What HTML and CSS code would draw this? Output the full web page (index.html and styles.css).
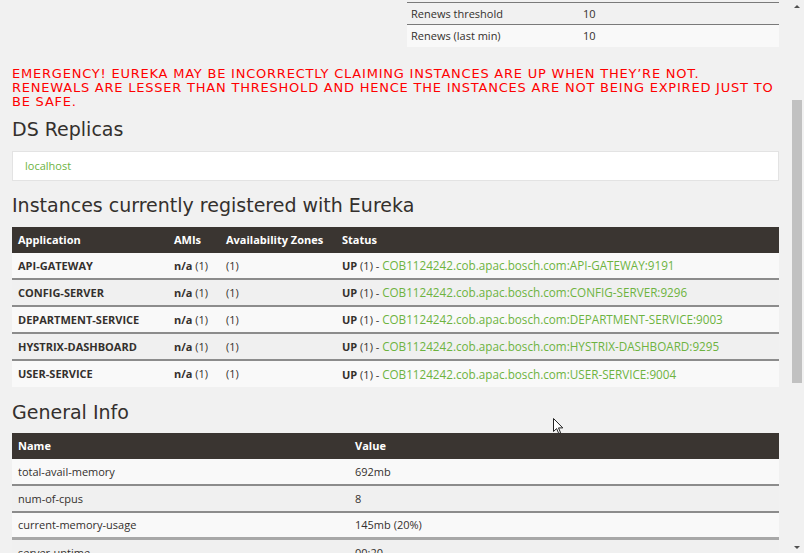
FILE: index.html
```html
<!DOCTYPE html>
<html>
<head>
<meta charset="utf-8">
<link rel="stylesheet" href="styles.css">
<title>Eureka</title>
</head>
<body>
<div class="page">
  <main class="content">
    <div class="status-grid">
      <div class="status-left"></div>
      <table class="kv">
        <tbody>
          <tr class="row-even"><td class="kv-name">Renews threshold</td><td>10</td></tr>
          <tr class="row-odd"><td class="kv-name">Renews (last min)</td><td>10</td></tr>
        </tbody>
      </table>
    </div>

    <p class="emergency">EMERGENCY! EUREKA MAY BE INCORRECTLY CLAIMING INSTANCES ARE UP WHEN THEY’RE NOT. RENEWALS ARE LESSER THAN THRESHOLD AND HENCE THE INSTANCES ARE NOT BEING EXPIRED JUST TO BE SAFE.</p>

    <h2 class="heading">DS Replicas</h2>
    <ul class="replicas">
      <li><a class="link" href="#">localhost</a></li>
    </ul>

    <h2 class="heading">Instances currently registered with Eureka</h2>
    <table class="data instances">
      <colgroup>
        <col class="c-app"><col class="c-ami"><col class="c-az"><col>
      </colgroup>
      <thead>
        <tr><th>Application</th><th>AMIs</th><th>Availability Zones</th><th>Status</th></tr>
      </thead>
      <tbody>
        <tr><td class="app">API-GATEWAY</td><td><b>n/a</b> (1)</td><td>(1)</td><td><b>UP</b> (1) - <a class="link" href="#">COB1124242.cob.apac.bosch.com:API-GATEWAY:9191</a></td></tr>
        <tr><td class="app">CONFIG-SERVER</td><td><b>n/a</b> (1)</td><td>(1)</td><td><b>UP</b> (1) - <a class="link" href="#">COB1124242.cob.apac.bosch.com:CONFIG-SERVER:9296</a></td></tr>
        <tr><td class="app">DEPARTMENT-SERVICE</td><td><b>n/a</b> (1)</td><td>(1)</td><td><b>UP</b> (1) - <a class="link" href="#">COB1124242.cob.apac.bosch.com:DEPARTMENT-SERVICE:9003</a></td></tr>
        <tr><td class="app">HYSTRIX-DASHBOARD</td><td><b>n/a</b> (1)</td><td>(1)</td><td><b>UP</b> (1) - <a class="link" href="#">COB1124242.cob.apac.bosch.com:HYSTRIX-DASHBOARD:9295</a></td></tr>
        <tr><td class="app">USER-SERVICE</td><td><b>n/a</b> (1)</td><td>(1)</td><td><b>UP</b> (1) - <a class="link" href="#">COB1124242.cob.apac.bosch.com:USER-SERVICE:9004</a></td></tr>
      </tbody>
    </table>

    <h2 class="heading">General Info</h2>
    <table class="data info">
      <colgroup>
        <col class="c-name"><col>
      </colgroup>
      <thead>
        <tr><th>Name</th><th>Value</th></tr>
      </thead>
      <tbody>
        <tr><td>total-avail-memory</td><td>692mb</td></tr>
        <tr><td>num-of-cpus</td><td>8</td></tr>
        <tr><td>current-memory-usage</td><td>145mb (20%)</td></tr>
        <tr class="last"><td>server-uptime</td><td>00:20</td></tr>
      </tbody>
    </table>
  </main>

  <div class="scrollbar">
    <span class="arrow arrow-up"></span>
    <span class="thumb"></span>
    <span class="arrow arrow-down"></span>
  </div>

  <svg class="cursor" width="12" height="17" viewBox="0 0 12 17">
    <path d="M0.5 0.5 L0.5 13.5 L3.6 10.6 L5.8 15.6 L7.6 14.8 L5.5 9.9 L9.8 9.9 Z" fill="#ffffff" stroke="#222222" stroke-width="1" stroke-linejoin="round"/>
  </svg>
</div>
</body>
</html>
```

FILE: styles.css
```css
* { box-sizing: border-box; }

html, body {
  margin: 0;
  padding: 0;
  height: 553px;
  overflow: hidden;
  background: #f1f1f1;
}

body {
  font-family: "Open Sans", "DejaVu Sans", sans-serif;
  font-size: 11px;
  color: #34302d;
}

.page {
  position: relative;
  display: flex;
  height: 553px;
}

.content {
  flex: 1;
  padding: 2px 10px 0 12px;
  min-width: 0;
}

/* top status table */
.status-grid {
  display: grid;
  grid-template-columns: 1fr 372px;
}

.kv {
  width: 100%;
  border-collapse: collapse;
}

.kv td {
  height: 22px;
  padding: 0 4px;
  border-top: 1px solid #7a7a7a;
  vertical-align: middle;
}

.kv .kv-name { width: 172px; }

.row-even td { background: #f1f1f1; }
.row-odd td { background: #f9f9f9; }

/* emergency */
.emergency {
  margin: 20px 0 0 0;
  font-family: "DejaVu Sans", sans-serif;
  font-size: 13px;
  line-height: 14px;
  color: #ff0000;
  letter-spacing: 0.78px;
}

.heading {
  margin: 9px 0 0 0;
  font-family: "DejaVu Sans", sans-serif;
  font-weight: normal;
  font-size: 19px;
  line-height: 22px;
  color: #34302d;
}

.replicas {
  list-style: none;
  margin: 11px 0 13px 0;
  padding: 0 12px;
  height: 30px;
  display: flex;
  align-items: center;
  background: #ffffff;
  border: 1px solid #e3e3e3;
}

.link {
  color: #6db33f;
  text-decoration: none;
}

.data td .link { font-size: 11.7px; }

/* data tables */
.data {
  width: 100%;
  border-collapse: collapse;
  table-layout: fixed;
  margin: 11px 0 14px 0;
}

.data th {
  background: #3a3531;
  color: #ffffff;
  font-weight: bold;
  text-align: left;
  height: 26px;
  padding: 0 6px;
  vertical-align: middle;
}

.data td {
  height: 27px;
  padding: 0 6px;
  vertical-align: middle;
  border-top: 2px solid #8c8c8c;
  white-space: nowrap;
}

.data tbody tr:first-child td { border-top: none; height: 26px; }

.data tbody tr:nth-child(odd) td { background: #f9f9f9; }
.data tbody tr:nth-child(even) td { background: #f0f0f0; }

.data .app { font-weight: bold; }

.info { margin-top: 10px; }

.c-app { width: 156px; }
.c-ami { width: 52px; }
.c-az { width: 116px; }
.c-name { width: 337px; }

.info .last td { border-top: 3px solid #a8a8a8; }

/* scrollbar */
.scrollbar {
  width: 15px;
  flex: none;
  display: flex;
  flex-direction: column;
  align-items: center;
  background: #f1f1f1;
}

.arrow {
  width: 0;
  height: 0;
  border-left: 3px solid transparent;
  border-right: 3px solid transparent;
}

.arrow-up {
  margin-top: 5px;
  border-bottom: 3px solid #505050;
}

.thumb {
  width: 10px;
  height: 283px;
  margin-top: 92px;
  margin-left: 1px;
  background: #c1c1c1;
}

.arrow-down {
  margin-top: auto;
  margin-bottom: 4px;
  border-top: 3px solid #505050;
}

.cursor {
  position: absolute;
  left: 553px;
  top: 418px;
}
```
